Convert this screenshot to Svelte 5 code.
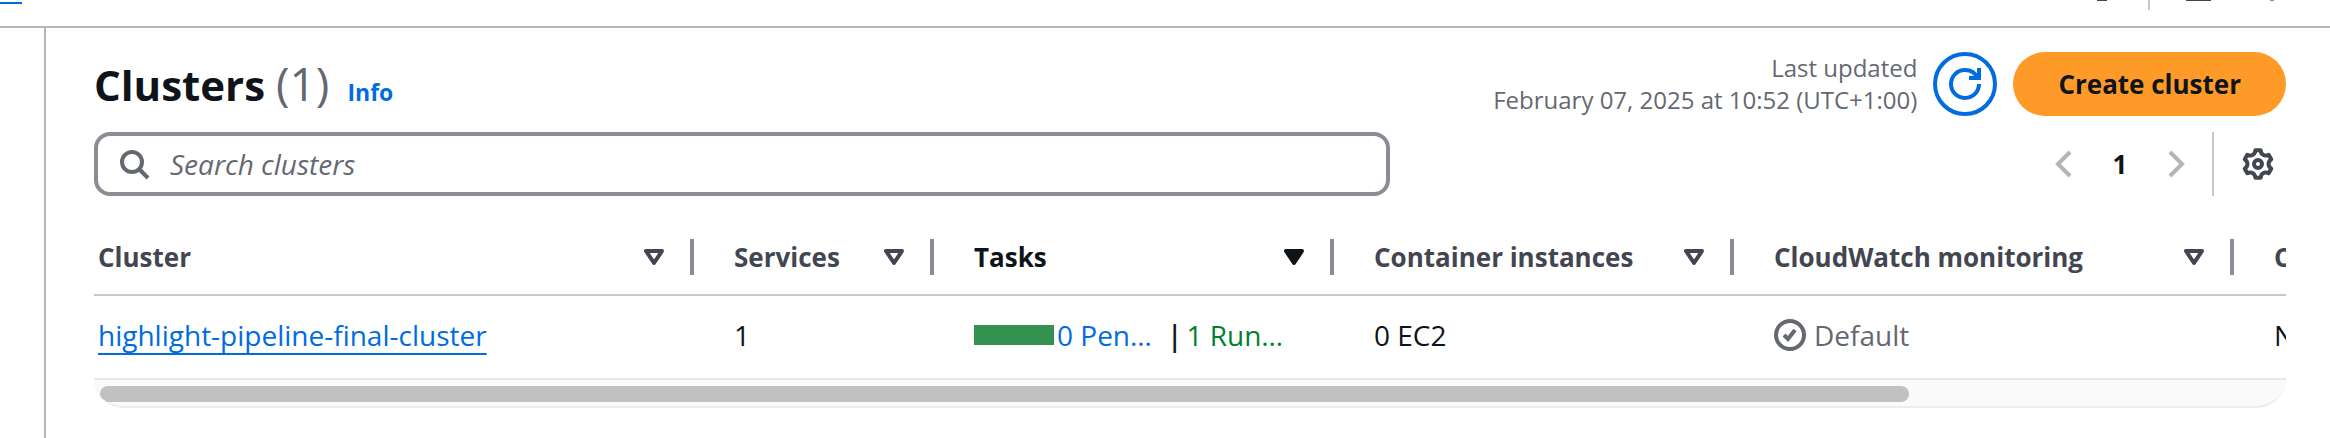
<script>
  const columns = [
    { label: 'Cluster', width: 600 },
    { label: 'Services', width: 240 },
    { label: 'Tasks', width: 400, sorted: true },
    { label: 'Container instances', width: 400 },
    { label: 'CloudWatch monitoring', width: 500 },
    { label: 'C', width: 500 }
  ];
  const scroll = { visible: 83 };
  let query = $state('');

  // Gear outline: one tooth and one valley, turned six times round the centre.
  function gear() {
    const turn = ([x, y], k) => {
      const a = (k * Math.PI) / 3;
      const px = 8 + x * Math.cos(a) - y * Math.sin(a);
      const py = 8 + x * Math.sin(a) + y * Math.cos(a);
      return `${px.toFixed(2)} ${py.toFixed(2)}`;
    };
    let d = `M${turn([-1.3, -6.9], 0)}`;
    for (let k = 0; k < 6; k++) {
      d += `L${turn([1.3, -6.9], k)}C${turn([1.5, -4.7], k)} ${turn([-1.5, -4.7], k + 1)} ${turn([-1.3, -6.9], k + 1)}`;
    }
    return d + 'Z';
  }
</script>

<div class="page">
  <header class="topbar">
    <span class="crumb"></span>
    <div class="tools">
      <span class="dot"></span>
      <span class="rule"></span>
      <span class="dash"></span>
      <span class="tick"></span>
    </div>
  </header>

  <div class="body">
    <aside class="side"></aside>
    <main class="panel">
      <div class="row heading">
        <div class="title">
          <h1>Clusters <span class="count">(1)</span></h1>
          <a class="info" href="#info">Info</a>
        </div>
        <div class="actions">
          <p class="updated">Last updated<br />February 07, 2025 at 10:52 (UTC+1:00)</p>
          <button class="refresh" aria-label="Refresh">
            <svg viewBox="0 0 16 16"><path d="M10 5h5V0" /><path d="M15 8a6.957 6.957 0 0 1-7 7 6.957 6.957 0 0 1-7-7 6.957 6.957 0 0 1 7-7 6.87 6.87 0 0 1 6.3 4" /></svg>
          </button>
          <button class="create">Create cluster</button>
        </div>
      </div>

      <div class="row filters">
        <label class="search">
          <svg viewBox="0 0 16 16" aria-hidden="true"><circle cx="7" cy="7" r="5" /><path d="m15 15-4.5-4.5" /></svg>
          <input type="text" placeholder="Search clusters" aria-label="Search clusters" bind:value={query} />
        </label>
        <nav class="pager">
          <button class="arrow" aria-label="Previous page" disabled><svg viewBox="0 0 16 16"><path d="M11 2 5 8l6 6" /></svg></button>
          <button class="current">1</button>
          <button class="arrow" aria-label="Next page" disabled><svg viewBox="0 0 16 16"><path d="m5 2 6 6-6 6" /></svg></button>
          <span class="split"></span>
          <button class="settings" aria-label="Preferences">
            <svg viewBox="0 0 16 16"><path d={gear()} /><circle cx="8" cy="8" r="2" /></svg>
          </button>
        </nav>
      </div>

      <div class="viewport">
        <table>
          <colgroup>
            {#each columns as c}<col style="width:{c.width}px" />{/each}
          </colgroup>
          <thead>
            <tr>
              {#each columns as c}
                <th class:sorted={c.sorted}>
                  <div class="head">
                    <span>{c.label}</span>
                    <svg viewBox="0 0 16 16" aria-hidden="true"><path d="M4 5h8l-4 6-4-6Z" /></svg>
                  </div>
                </th>
              {/each}
            </tr>
          </thead>
          <tbody>
            <tr>
              <td><a class="name" href="#cluster">highlight-pipeline-final-cluster</a></td>
              <td>1</td>
              <td>
                <div class="tasks">
                  <span class="bar"></span>
                  <span class="pending">0 Pen…</span>
                  <span class="sep">|</span>
                  <span class="running">1 Run…</span>
                </div>
              </td>
              <td>0 EC2</td>
              <td>
                <div class="status">
                  <svg viewBox="0 0 16 16" aria-hidden="true"><circle cx="8" cy="8" r="7" /><path d="m5 8 2 2 3.5-4.5" /></svg>
                  Default
                </div>
              </td>
              <td>N</td>
            </tr>
          </tbody>
        </table>
      </div>
      <div class="track"><div class="thumb" style="width:{scroll.visible}%"></div></div>
    </main>
  </div>
</div>

<style>
  :global(body) { background: #fff; }
  * { box-sizing: border-box; }
  .page { font-family: 'Open Sans', 'Noto Sans', sans-serif; font-size: 28px; line-height: 40px; color: #0f141a; min-height: 100vh; display: flex; flex-direction: column; }
  button, input { font: inherit; color: inherit; background: none; border: 0; padding: 0; margin: 0; }
  svg { display: block; flex: none; width: 32px; height: 32px; fill: none; stroke: currentColor; stroke-width: 2; overflow: visible; }

  .topbar { height: 28px; flex: none; border-bottom: 2px solid #b4b4bb; display: flex; justify-content: space-between; align-items: flex-start; }
  .crumb { width: 22px; height: 4px; border-bottom: 2px solid #006ce0; }
  .tools { display: flex; align-items: flex-start; padding-right: 56px; }
  .dot { width: 10px; height: 1px; background: #424650; margin-right: 41px; }
  .rule { width: 2px; height: 10px; background: #c6c6cd; margin-right: 36px; }
  .dash { width: 25px; height: 1px; background: #424650; margin-right: 59px; }
  .tick { width: 4px; height: 1px; background: #8c8c94; }

  .body { display: flex; flex: 1; }
  .side { width: 46px; flex: none; border-right: 2px solid #b4b4bb; }
  .panel { flex: 1; min-width: 0; padding: 24px 44px 0 48px; }
  .row { display: flex; justify-content: space-between; align-items: center; }
  .heading { height: 64px; margin-bottom: 16px; }
  .title { display: flex; align-items: baseline; gap: 18px; }
  h1 { margin: 0; font-size: 42px; line-height: 60px; font-weight: 700; }
  .count { font-size: 46px; font-weight: 500; color: #656871; }
  .info { font-size: 23px; font-weight: 700; color: #006ce0; text-decoration: none; }
  .actions { display: flex; align-items: center; gap: 16px; }
  .updated { margin: 0; font-size: 24px; line-height: 32px; text-align: right; color: #656871; }
  .refresh { width: 64px; height: 64px; border: 4px solid #006ce0; border-radius: 32px; color: #006ce0; display: grid; place-items: center; }
  .create { height: 64px; padding: 0 45px; border-radius: 32px; background: #fe9a28; font-size: 26px; font-weight: 700; }

  .search { flex: 0 1 1296px; height: 64px; border: 4px solid #8c8c94; border-radius: 16px; padding: 0 20px; display: flex; align-items: center; gap: 20px; color: #656871; }
  .search input { flex: 1; min-width: 0; outline: 0; }
  .search input::placeholder { color: #656871; font-style: italic; opacity: 1; }
  .pager { display: flex; align-items: center; }
  .arrow { color: #b4b4bb; }
  .current { width: 80px; font-size: 26px; font-weight: 700; }
  .split { width: 2px; height: 64px; background: #c6c6cd; margin: 0 28px 0 20px; }
  .settings { color: #424650; margin-right: 12px; }
  .settings svg { stroke-linejoin: round; }

  .viewport { overflow: hidden; margin-top: 24px; }
  table { width: 2640px; table-layout: fixed; border-collapse: separate; border-spacing: 0; }
  th, td { text-align: left; padding: 0 24px 0 40px; }
  th:first-child, td:first-child { padding-left: 4px; }
  th { height: 76px; border-bottom: 2px solid #c6c6cd; padding-right: 0; color: #424650; font-size: 26px; font-weight: 700; }
  .head { display: flex; align-items: center; justify-content: space-between; height: 36px; padding-right: 20px; border-right: 4px solid #8c8c94; white-space: nowrap; }
  .head svg { stroke-linejoin: round; }
  .sorted { color: #0f141a; }
  .sorted path { fill: currentColor; }
  td { height: 82px; padding-bottom: 4px; white-space: nowrap; }
  .name { color: #006ce0; text-decoration: underline 2px; text-underline-offset: 7px; text-decoration-skip-ink: none; }
  .tasks { display: flex; align-items: center; }
  .bar { width: 80px; height: 20px; background: #349250; margin-right: 3px; }
  .pending, .running { width: 104px; }
  .pending { color: #006ce0; }
  .running { color: #00802f; }
  .sep { margin: 0 4px 0 6px; font-weight: 600; }
  .status { display: flex; align-items: center; gap: 8px; color: #656871; }
  .track { height: 30px; padding: 6px; background: #fafafa; border-top: 2px solid #e8e8e8; border-bottom: 2px solid #ededed; border-radius: 0 0 32px 32px; overflow: hidden; }
  .thumb { height: 16px; border-radius: 8px; background: #c1c1c1; }
</style>
